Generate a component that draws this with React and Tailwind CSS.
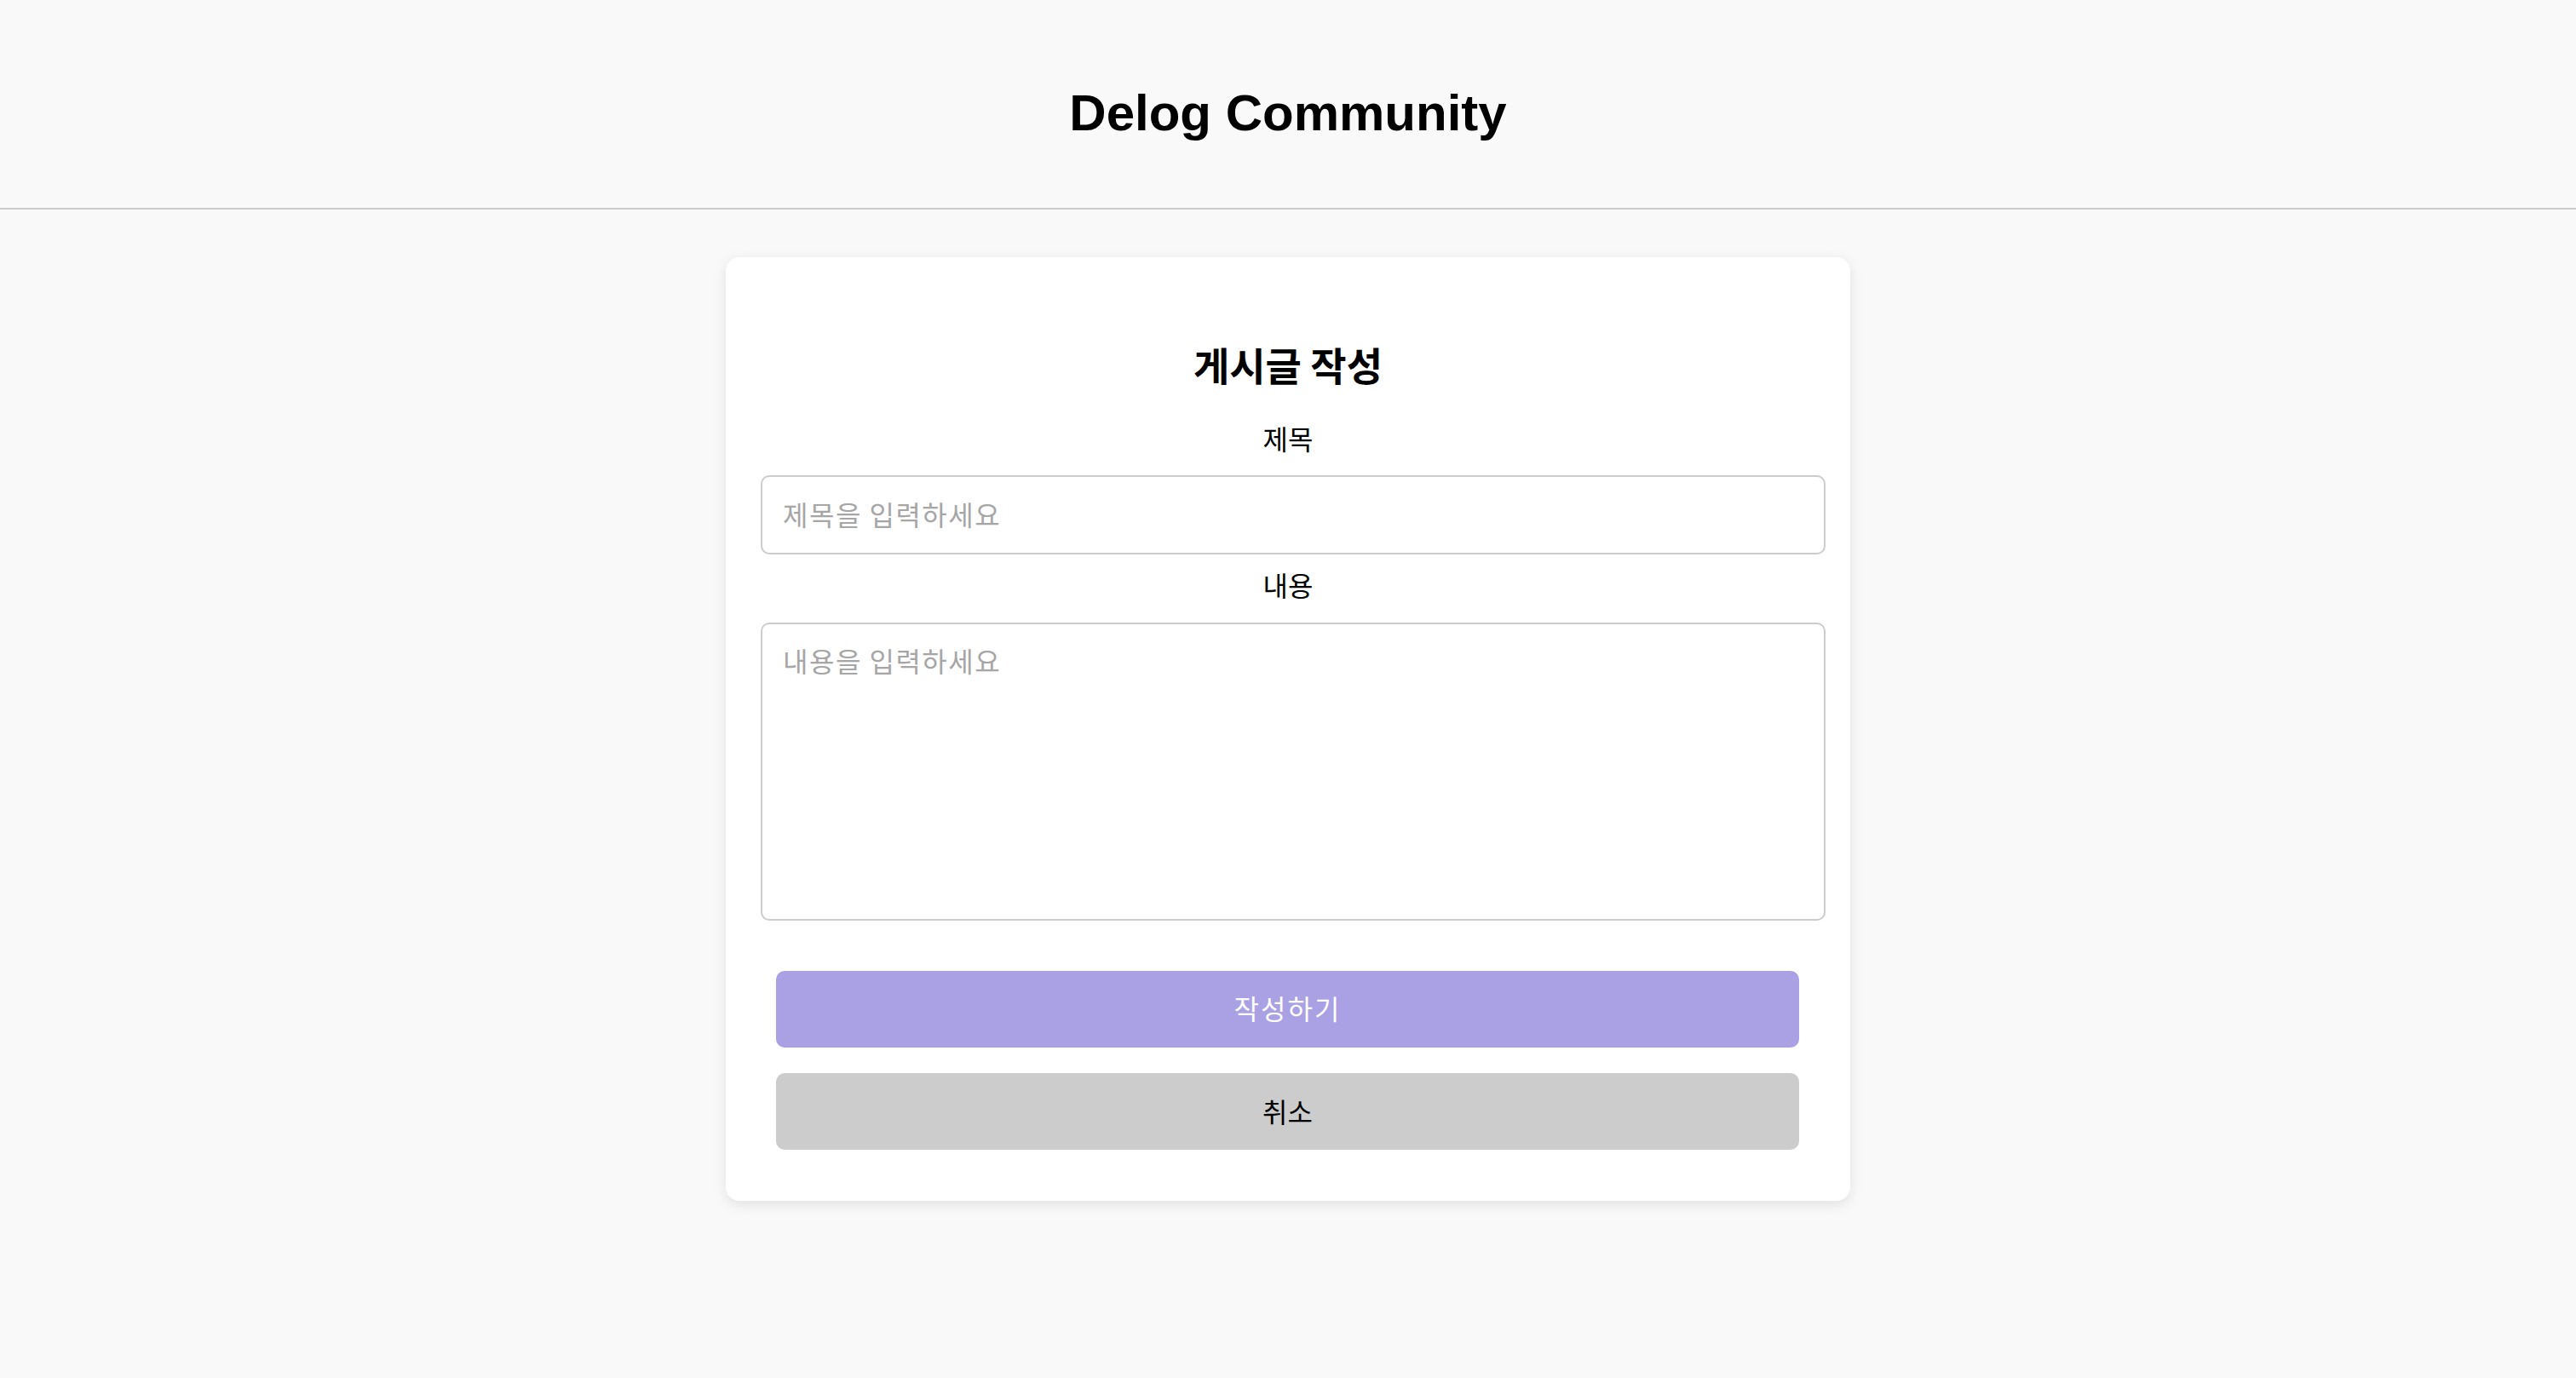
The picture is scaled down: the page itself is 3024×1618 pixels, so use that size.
import React from "react";

const KR = "font-['Noto_Sans_CJK_KR','Noto_Sans',sans-serif]";

export default function App() {
  return (
    <div className="min-h-[1618px] bg-[#f9f9f9] font-['Liberation_Sans','Noto_Sans_CJK_KR',sans-serif]">
      <header className="h-[246px] border-b-2 border-[#cccccc] pt-[103px] text-center">
        <h1 className="text-[60px] font-bold leading-[60px] text-black">Delog Community</h1>
      </header>
      <main className="pt-[56px]">
        <div className="mx-auto flex w-[1320px] flex-col rounded-[16px] bg-white pb-[60px] pt-[101px] shadow-[0_4px_16px_rgba(0,0,0,0.1)]">
          <h2 className={`${KR} text-center text-[46px] font-bold leading-[48px] text-black`}>게시글 작성</h2>
          <label className={`${KR} mt-[47px] text-center text-[32px] leading-[32px] text-black`}>제목</label>
          <input
            type="text"
            placeholder="제목을 입력하세요"
            className={`${KR} ml-[41px] mt-[28px] h-[93px] w-[1250px] rounded-[10px] border-2 border-[#cccccc] bg-white px-[24px] pb-[3px] text-[32px] tracking-[1.5px] text-black outline-none placeholder:text-[#a6a6a6]`}
          />
          <label className={`${KR} mt-[19px] text-center text-[32px] leading-[32px] text-black`}>내용</label>
          <textarea
            placeholder="내용을 입력하세요"
            className={`${KR} ml-[41px] mt-[29px] h-[350px] w-[1250px] resize-none rounded-[10px] border-2 border-[#cccccc] bg-white px-[24px] pb-[24px] pt-[26px] text-[32px] leading-[32px] tracking-[1.5px] text-black outline-none placeholder:text-[#a6a6a6]`}
          />
          <button className={`${KR} ml-[59px] mt-[59px] h-[90px] w-[1201px] rounded-[10px] bg-[#aaa0e4] pb-[5px] text-[32px] tracking-[2px] text-white`}>
            작성하기
          </button>
          <button className={`${KR} ml-[59px] mt-[30px] h-[90px] w-[1201px] rounded-[10px] bg-[#cccccc] pb-[3px] text-[32px] text-black`}>
            취소
          </button>
        </div>
      </main>
    </div>
  );
}
